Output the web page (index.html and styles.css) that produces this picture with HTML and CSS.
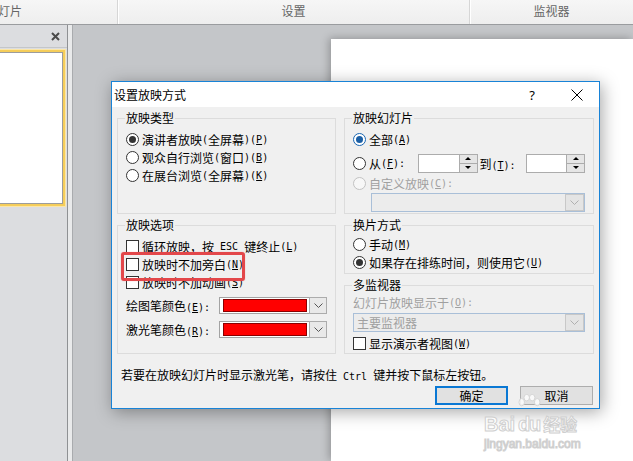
FILE: index.html
```html
<!DOCTYPE html>
<html lang="zh-CN">
<head>
  <meta charset="utf-8">
  <title>设置放映方式</title>
  <link rel="stylesheet" href="styles.css">
</head>
<body>
  <header class="ribbon">
    <div class="group first"><span>开始放映幻灯片</span></div>
    <div class="group mid">设置</div>
    <div class="group last">监视器</div>
  </header>

  <div class="workspace">
    <aside class="slides-pane">
      <div class="pane-head">
        <svg class="pane-close" width="9" height="9" viewBox="0 0 9 9"><path d="M1 1L8 8M8 1L1 8" /></svg>
      </div>
      <div class="thumb"></div>
    </aside>
    <div class="pane-split"></div>
    <main class="canvas">
      <div class="slide"></div>
    </main>
  </div>

  <div class="dialog">
    <div class="titlebar">
      <span class="title">设置放映方式</span>
      <span class="help">?</span>
      <svg class="close" width="12" height="12" viewBox="0 0 12 12"><path d="M0.5 0.5L11.5 11.5M11.5 0.5L0.5 11.5" /></svg>
    </div>

    <div class="dialog-body">
      <div class="groups">
        <fieldset class="show-type">
          <legend>放映类型</legend>
          <label class="opt"><span class="radio on"></span>演讲者放映<span class="en">(</span>全屏幕<span class="en">)(<u>P</u>)</span></label>
          <label class="opt"><span class="radio"></span>观众自行浏览<span class="en">(</span>窗口<span class="en">)(<u>B</u>)</span></label>
          <label class="opt"><span class="radio"></span>在展台浏览<span class="en">(</span>全屏幕<span class="en">)(<u>K</u>)</span></label>
        </fieldset>

        <fieldset class="show-slides">
          <legend>放映幻灯片</legend>
          <label class="opt"><span class="radio on focus"></span>全部<span class="en">(<u>A</u>)</span></label>
          <div class="opt range">
            <span class="radio"></span>从<span class="en">(<u>F</u>):</span>
            <span class="spin from"><span class="spin-field"></span><span class="spin-btns"><i class="up"></i><i class="down"></i></span></span>
            <span class="to">到<span class="en">(<u>T</u>):</span></span>
            <span class="spin"><span class="spin-field"></span><span class="spin-btns"><i class="up"></i><i class="down"></i></span></span>
          </div>
          <label class="opt off"><span class="radio"></span>自定义放映<span class="en">(<u>C</u>):</span></label>
          <div class="select off custom">
            <span class="select-text"></span>
            <span class="select-btn"><svg width="9" height="5" viewBox="0 0 9 5"><path d="M0.5 0.5L4.5 4.5L8.5 0.5" /></svg></span>
          </div>
        </fieldset>

        <fieldset class="show-options">
          <legend>放映选项</legend>
          <label class="opt"><span class="check"></span>循环放映，按<span class="en"> ESC </span>键终止<span class="en">(<u>L</u>)</span></label>
          <label class="opt"><span class="check"></span>放映时不加旁白<span class="en">(<u>N</u>)</span></label>
          <label class="opt"><span class="check"></span>放映时不加动画<span class="en">(<u>S</u>)</span></label>
          <div class="colors">
            <div class="color-row">
              <span class="color-label">绘图笔颜色<span class="en">(<u>E</u>):</span></span>
              <span class="color-pick"><span class="swatch"></span><span class="select-btn"><svg width="9" height="5" viewBox="0 0 9 5"><path d="M0.5 0.5L4.5 4.5L8.5 0.5" /></svg></span></span>
            </div>
            <div class="color-row">
              <span class="color-label">激光笔颜色<span class="en">(<u>R</u>):</span></span>
              <span class="color-pick"><span class="swatch"></span><span class="select-btn"><svg width="9" height="5" viewBox="0 0 9 5"><path d="M0.5 0.5L4.5 4.5L8.5 0.5" /></svg></span></span>
            </div>
          </div>
        </fieldset>

        <div class="stack">
          <fieldset class="advance">
            <legend>换片方式</legend>
            <label class="opt"><span class="radio"></span>手动<span class="en">(<u>M</u>)</span></label>
            <label class="opt"><span class="radio on"></span>如果存在排练时间，则使用它<span class="en">(<u>U</u>)</span></label>
          </fieldset>
          <fieldset class="monitors">
            <legend>多监视器</legend>
            <div class="opt off">幻灯片放映显示于<span class="en">(<u>O</u>):</span></div>
            <div class="select off monitor">
              <span class="select-text">主要监视器</span>
              <span class="select-btn"><svg width="9" height="5" viewBox="0 0 9 5"><path d="M0.5 0.5L4.5 4.5L8.5 0.5" /></svg></span>
            </div>
            <label class="opt"><span class="check"></span>显示演示者视图<span class="en">(<u>W</u>)</span></label>
          </fieldset>
        </div>
      </div>

      <p class="hint">若要在放映幻灯片时显示激光笔，请按住<span class="en"> Ctrl </span>键并按下鼠标左按钮。</p>

      <div class="buttons">
        <button class="btn default">确定</button>
        <button class="btn">取消</button>
      </div>
    </div>

    <div class="mark"></div>
  </div>

  <div class="watermark">
    <div class="wm-logo">
      <span>Bai</span>
      <span class="du-wrap">
        <svg class="paw" width="24" height="20" viewBox="0 0 26 22">
          <ellipse cx="5" cy="9" rx="3" ry="4" />
          <ellipse cx="10.5" cy="4" rx="3" ry="3.6" />
          <ellipse cx="16.5" cy="4" rx="3" ry="3.6" />
          <ellipse cx="22" cy="9" rx="3" ry="4" />
        </svg>
        <span class="du">du</span>
      </span>
      <span class="cn">经验</span>
    </div>
    <div class="wm-url">jingyan.baidu.com</div>
  </div>
</body>
</html>
```

FILE: styles.css
```css
html, body {
  margin: 0;
  height: 100%;
}

body {
  position: relative;
  overflow: hidden;
  font-family: "Noto Sans CJK SC", "Microsoft YaHei", sans-serif;
  font-size: 12px;
  color: #000;
  background: #c4c6c9;
  display: flex;
  flex-direction: column;
}

.en {
  font-family: "DejaVu Sans Mono", monospace;
  font-size: 10px;
  white-space: pre;
}

/* ribbon strip */
.ribbon {
  height: 24px;
  flex: none;
  display: flex;
  background: linear-gradient(#f6f6f6, #eeeeee);
  border-bottom: 1px solid #9a9c9f;
  color: #666;
  line-height: 22px;
}

.group {
  border-right: 1px solid #d6d6d6;
  box-shadow: 1px 0 0 #fff;
  text-align: center;
  overflow: hidden;
}

.group.first {
  width: 117px;
  text-align: left;
}

.group.first span {
  margin-left: -62px;
}

.group.mid {
  width: 351px;
}

.group.last {
  flex: 1;
  border-right: 0;
  box-shadow: none;
}

/* workspace behind the dialog */
.workspace {
  flex: 1;
  display: flex;
}

.slides-pane {
  width: 67px;
  background: #dcdde0;
  border-right: 1px solid #8f9194;
}

.pane-head {
  height: 22px;
  display: flex;
  justify-content: flex-end;
  align-items: center;
  padding-right: 7px;
  border-bottom: 1px solid #c4c6c9;
}

.pane-close {
  stroke: #4a4a4a;
  stroke-width: 2;
}

.thumb {
  margin: 4px 4px 0 -4px;
  height: 150px;
  background: #fff;
  border: 1px solid #9c9c9c;
  box-shadow: 0 0 0 2px #f5cd5a, 0 0 0 3px #fbe6a8;
}

.pane-split {
  width: 4px;
  background: #e9eaeb;
  border-right: 1px solid #a9abae;
}

.canvas {
  flex: 1;
  padding: 14px 0 0 258px;
}

.slide {
  height: 100%;
  background: #fff;
  box-shadow: -2px -1px 8px rgba(0, 0, 0, .25);
}

/* dialog window */
.dialog {
  position: absolute;
  left: 111px;
  top: 81px;
  width: 489px;
  height: 328px;
  box-sizing: border-box;
  border: 1px solid #1883d7;
  background: #f0f0f0;
  box-shadow: 2px 3px 16px rgba(0, 0, 0, .35);
  display: flex;
  flex-direction: column;
}

.titlebar {
  height: 25px;
  flex: none;
  background: #fff;
  display: flex;
  align-items: center;
  padding: 0 16px 0 2px;
}

.title {
  flex: 1;
}

.help {
  font-family: "Noto Sans", sans-serif;
  font-size: 13px;
  margin-right: 36px;
}

.close {
  stroke: #000;
  stroke-width: 1;
}

.dialog-body {
  flex: 1;
  padding: 4px 5px 0 5px;
}

.groups {
  display: grid;
  grid-template-columns: 219px 250px;
  grid-template-rows: 103px 136px;
  column-gap: 8px;
  row-gap: 4px;
}

fieldset {
  margin: 0;
  padding: 0 8px;
  min-width: 0;
  border: 1px solid #dcdcdc;
  box-sizing: border-box;
}

legend {
  padding: 0 1px;
  margin-left: -1px;
  line-height: 14px;
}

.stack {
  display: flex;
  flex-direction: column;
  gap: 4px;
}

.advance {
  height: 56px;
}

.monitors {
  flex: 1;
}

.opt {
  display: flex;
  align-items: center;
  height: 18px;
  white-space: nowrap;
}

.opt.off,
.select.off .select-text {
  color: #a0a0a0;
}

.show-type .opt:first-of-type,
.show-slides .opt:first-of-type,
.show-options .opt:first-of-type {
  margin-top: 5px;
}

.advance .opt:first-of-type {
  margin-top: 3px;
}

.monitors .opt:first-of-type {
  margin-top: 1px;
}

.show-slides .range,
.show-slides .opt.off {
  height: 20px;
}

/* radio and check marks */
.radio,
.check {
  flex: none;
  width: 13px;
  height: 13px;
  box-sizing: border-box;
  border: 1px solid #333;
  background: #fff;
  margin-right: 3px;
}

.radio {
  border-radius: 50%;
  display: flex;
  align-items: center;
  justify-content: center;
}

.radio.on::after {
  content: "";
  width: 7px;
  height: 7px;
  border-radius: 50%;
  background: #333;
}

.radio.focus {
  border-color: #1b67b3;
}

.radio.focus::after {
  background: #1b5fa5;
}

.opt.off .radio {
  border-color: #c2c2c2;
  background: #f7f7f7;
}

/* spin boxes */
.spin {
  display: flex;
  width: 60px;
  height: 19px;
  box-sizing: border-box;
  border: 1px solid #acacac;
  background: #fff;
}

.spin.from {
  margin: 0 2px 0 13px;
}

.to {
  margin-right: 10px;
}

.spin-field {
  flex: 1;
}

.spin-btns {
  width: 17px;
  display: flex;
  flex-direction: column;
  border-left: 1px solid #acacac;
  background: #e5e5e5;
}

.spin-btns i {
  flex: 1;
  display: flex;
  align-items: center;
  justify-content: center;
}

.spin-btns i + i {
  border-top: 1px solid #acacac;
}

.spin-btns i::after {
  content: "";
  border-left: 3px solid transparent;
  border-right: 3px solid transparent;
}

.spin-btns .up::after {
  border-bottom: 3px solid #000;
}

.spin-btns .down::after {
  border-top: 3px solid #000;
}

/* drop-down boxes */
.select {
  display: flex;
  height: 19px;
  box-sizing: border-box;
  border: 1px solid #a9bfd8;
  background: #ececec;
}

.select.custom {
  margin-left: 18px;
}

.select.monitor {
  margin: 2px 0 2px 0;
}

.select-text {
  flex: 1;
  padding-left: 3px;
  line-height: 17px;
}

.select-btn {
  width: 17px;
  display: flex;
  align-items: center;
  justify-content: center;
  border: 1px solid #c8c8c8;
  background: #e4e4e4;
}

.select-btn svg {
  fill: none;
  stroke: #b0b0b0;
}

.colors {
  margin-top: 6px;
  display: flex;
  flex-direction: column;
  gap: 7px;
}

.color-row {
  display: flex;
  align-items: center;
}

.color-label {
  width: 93px;
  white-space: nowrap;
}

.color-pick {
  display: flex;
  width: 108px;
  height: 17px;
  box-sizing: border-box;
  border: 1px solid #a3a3a3;
  background: #fff;
  padding: 1px 0 1px 3px;
  gap: 2px;
}

.swatch {
  flex: 1;
  background: #f00;
  border: 1px solid #8a0000;
}

.color-pick .select-btn {
  width: 16px;
  margin: -2px -1px -2px 0;
  border-color: #acacac;
  background: #e9e9e9;
}

.color-pick .select-btn svg {
  stroke: #555;
}

/* footer */
.hint {
  margin: 14px 0 0 4px;
  line-height: 14px;
  white-space: nowrap;
}

.buttons {
  display: flex;
  justify-content: flex-end;
  gap: 12px;
  margin: 2px 1px 0 0;
}

.btn {
  width: 73px;
  height: 19px;
  padding: 0;
  font: inherit;
  line-height: 15px;
  background: #e1e1e1;
  border: 1px solid #adadad;
  color: #000;
}

.btn.default {
  border: 2px solid #0a78d4;
}

/* red annotation box */
.mark {
  position: absolute;
  left: 9px;
  top: 170px;
  width: 124px;
  height: 29px;
  box-sizing: border-box;
  border: 3px solid #e3474a;
  border-radius: 3px;
  box-shadow: 0 0 1px rgba(227, 71, 74, .6);
}

/* watermark */
.watermark {
  position: absolute;
  left: 484px;
  top: 392px;
  width: 110px;
  color: rgba(255, 255, 255, .85);
  -webkit-text-stroke: 1px #cfcfcf;
  font-family: "Liberation Sans", sans-serif;
  font-weight: bold;
  pointer-events: none;
}

.wm-logo {
  display: flex;
  align-items: flex-end;
  gap: 2px;
  height: 44px;
  font-size: 20px;
  line-height: 24px;
}

.du-wrap {
  display: flex;
  flex-direction: column;
  align-items: center;
}

.paw {
  fill: rgba(255, 255, 255, .8);
  stroke: #d2d2d2;
  margin-bottom: -2px;
}

.du {
  letter-spacing: -1px;
}

.cn {
  font-family: "Noto Sans CJK SC", sans-serif;
  font-size: 17px;
}

.wm-url {
  font-size: 12px;
  font-weight: normal;
  margin-top: 1px;
}
```
